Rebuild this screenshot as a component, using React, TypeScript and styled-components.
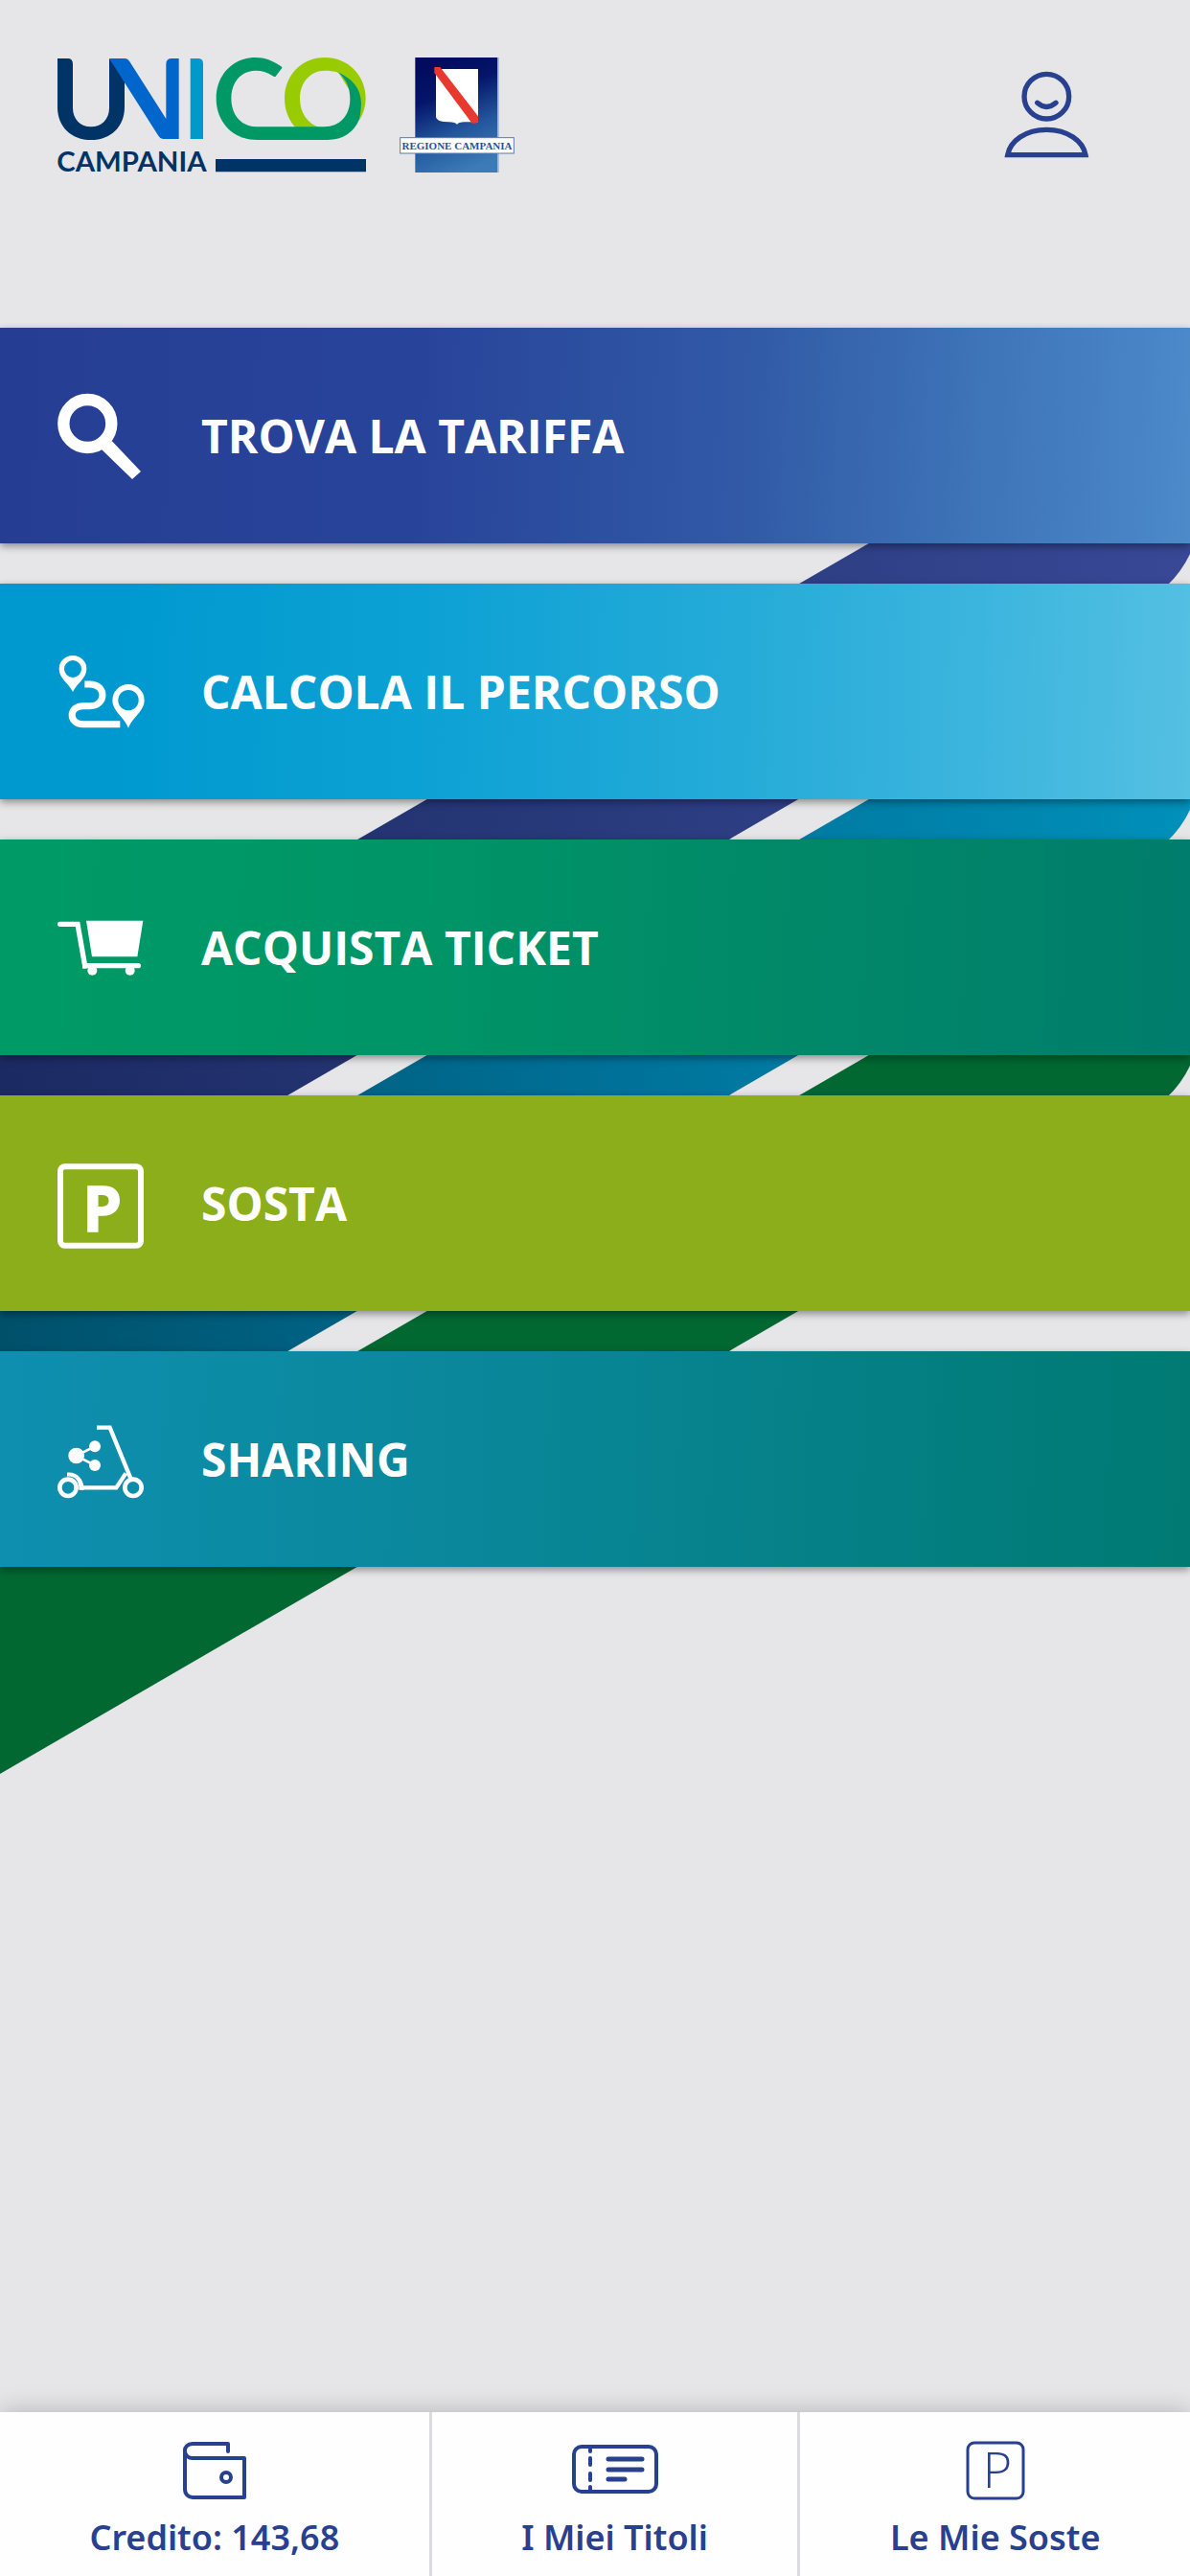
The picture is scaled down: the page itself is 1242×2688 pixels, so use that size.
import React from "react";
import styled, { createGlobalStyle } from "styled-components";

const BLUE = "#27408f";

const GlobalStyle = createGlobalStyle`
  *, *::before, *::after { box-sizing: border-box; }
  body {
    margin: 0;
    background: #e6e5e7;
    font-family: "Open Sans", "Noto Sans", sans-serif;
  }
`;

const Screen = styled.div`
  display: flex;
  flex-direction: column;
  min-height: 100vh;
`;

const Header = styled.header`
  display: flex;
  align-items: flex-start;
  justify-content: space-between;
  padding: 60px 105px 162px 60px;
`;

const Brands = styled.div`
  display: flex;
  gap: 35px;
`;

const Logo = styled.svg`
  overflow: visible;
`;

const ProfileButton = styled.button`
  display: flex;
  margin: 0;
  padding: 14px 0;
  border: 0;
  background: none;
  color: ${BLUE};
  cursor: pointer;
`;

const Menu = styled.nav`
  position: relative;
  z-index: 0;
  display: flex;
  flex-direction: column;
  gap: 42px;
`;

const Ribbons = styled.svg`
  position: absolute;
  top: 0;
  left: 0;
  z-index: -1;
  width: 100%;
  height: 1509px;
`;

const MenuItem = styled.a<{ $fill: string }>`
  display: flex;
  align-items: center;
  gap: 60px;
  height: 225px;
  padding: 0 60px;
  background: ${(p) => p.$fill};
  box-shadow: 0 3px 8px rgba(0, 0, 0, 0.4);
  color: #fff;
  font-size: 48px;
  line-height: 64px;
  font-weight: 700;
  text-decoration: none;
`;

const MenuIcon = styled.svg`
  flex: none;
  width: 90px;
  height: 90px;
  overflow: visible;
`;

const TabBar = styled.nav`
  display: flex;
  margin-top: auto;
  background: #fefefe;
  box-shadow: 0 -2px 24px rgba(0, 0, 0, 0.2);
`;

const Tab = styled.a`
  display: flex;
  flex: 1 1 auto;
  flex-direction: column;
  align-items: center;
  gap: 16px;
  padding: 31px 24px 16px;
  color: ${BLUE};
  font-family: "Noto Sans", "Open Sans", sans-serif;
  font-size: 36px;
  line-height: 48px;
  font-weight: 600;
  text-decoration: none;

  & + & {
    border-left: 3px solid #dbdade;
  }
`;

const TabIcon = styled.svg`
  width: 90px;
  height: 60px;
  overflow: visible;
  fill: none;
  stroke: currentColor;
  stroke-width: 4;
`;

const UnicoLogo = () => (
  <Logo width="322" height="120" viewBox="60 60 966 360" role="img" aria-label="Unico Campania">
    <path fill="#036" d="M60 63H92Q108 63 108 80V218C108 253 132 277 165 277S222 253 222 218V63L270 125V215C270 276 227 318 165 318S60 276 60 215Z" />
    <path fill="#06c" d="M222 63H272Q280 63 286 73L400 252V80Q400 63 418 63H440V315H390Q382 315 376 305Z" />
    <path fill="#09c" d="M476 63H500Q516 63 516 79V315H476Z" />
    <path fill="#9c0" d="M806 280C783 255 771 222 771 188C771 115 825 60 897 60S1025 115 1025 188C1025 212 1018 236 1004 258L985 180L940 107C925 102 910 101 897 101C850 101 819 140 819 188C819 232 842 268 884 280Z" />
    <path fill="#096" d="M763 93L743 119Q739 122 734 118C717 106 700 101 680 101C635 101 604 138 604 188S635 277 682 277H895C944 277 976 242 976 190C976 155 965 126 935 104C985 126 1011 158 1011 205C1010 223 1009 238 1004 256C988 294 955 318 905 318H685C610 318 557 262 557 188S610 60 680 60C708 60 735 70 759 87Q764 90 763 93Z" />
    <path fill="#036" d="M555 378H1026V418H555Z" />
    <text x="58" y="418" fill="#036" fontFamily="Lato, sans-serif" fontWeight="700" fontSize="88">CAMPANIA</text>
  </Logo>
);

const RegioneLogo = () => (
  <Logo width="120" height="120" viewBox="81 60 360 360" role="img" aria-label="Regione Campania">
    <defs>
      <linearGradient id="regione" x1="0.3" y1="0" x2="0.6" y2="1">
        <stop offset="0" stopColor="#020b5c" />
        <stop offset="0.3" stopColor="#04156a" />
        <stop offset="0.65" stopColor="#23569c" />
        <stop offset="1" stopColor="#3b7cb8" />
      </linearGradient>
    </defs>
    <path fill="url(#regione)" d="M130 60H388V420H130Z" />
    <path fill="#8fb0d8" d="M388 60H392V420H388Z" />
    <path fill="#fff" d="M195 96H327V262H285Q265 262 261 270Q256 262 235 262Q196 262 195 246Z" />
    <path fill="#e8392f" d="M190 90H208L327 244V259L320 266H308L190 108Z" />
    <rect x="83" y="311" width="356" height="49" fill="#fff" stroke="#5878b4" strokeWidth="3" />
    <text x="261" y="347" textAnchor="middle" fill="#27519f" fontFamily="'Liberation Serif', serif" fontWeight="700" fontSize="33">REGIONE CAMPANIA</text>
  </Logo>
);

const ProfileIcon = () => (
  <svg width="89" height="92" viewBox="83 73 267 276" fill="none" stroke="currentColor" strokeWidth="16" aria-hidden="true">
    <circle cx="216" cy="153" r="70" />
    <path strokeLinecap="round" d="M187 173Q216 198 245 173" />
    <path d="M94 336C102 292 150 257 216 257S330 292 338 336Z" />
  </svg>
);

const RibbonShape = "M0 750L1242 31V236Q1233 255 1218 269L0 975Z";

const RibbonArt = () => (
  <Ribbons viewBox="0 0 1242 1509" preserveAspectRatio="none" aria-hidden="true">
    <defs>
      <linearGradient id="ribbonBlue">
        <stop offset="0" stopColor="#1b2a62" />
        <stop offset="0.5" stopColor="#293a7c" />
        <stop offset="1" stopColor="#384896" />
      </linearGradient>
      <linearGradient id="ribbonTeal">
        <stop offset="0" stopColor="#00506a" />
        <stop offset="0.5" stopColor="#007097" />
        <stop offset="1" stopColor="#0090ba" />
      </linearGradient>
    </defs>
    <path fill="url(#ribbonBlue)" d={RibbonShape} />
    <path fill="url(#ribbonTeal)" transform="translate(0 267)" d={RibbonShape} />
    <path fill="#026831" transform="translate(0 534)" d={RibbonShape} />
  </Ribbons>
);

const SearchIcon = () => (
  <MenuIcon viewBox="60 58 270 270" aria-hidden="true">
    <circle cx="154" cy="154" r="75" fill="none" stroke="#fff" strokeWidth="37" />
    <path fill="#fff" d="M198 235L230 208L321 304L294 328Z" />
  </MenuIcon>
);

const RouteIcon = () => (
  <MenuIcon viewBox="60 50 270 270" aria-hidden="true">
    <path fill="#fff" fillRule="evenodd" d="M108 185C95 158 65 143 65 113A43 42 0 0 1 151 113C151 143 121 158 108 185ZM108 86A27 27 0 1 0 108 140A27 27 0 1 0 108 86Z" />
    <path fill="#fff" fillRule="evenodd" d="M282 298C268 262 232 245 232 211A50 50 0 0 1 332 211C332 245 296 262 282 298ZM282 179A32 32 0 1 0 282 243A32 32 0 1 0 282 179Z" />
    <path fill="none" stroke="#fff" strokeWidth="21" d="M145 161H162C214 161 214 229 162 229H140C94 229 94 286 140 286H256" />
  </MenuIcon>
);

const CartIcon = () => (
  <MenuIcon viewBox="60 40 270 270" aria-hidden="true">
    <path fill="#fff" d="M150 90H328L310 203H168Z" />
    <path fill="none" stroke="#fff" strokeWidth="16" strokeLinecap="round" d="M68 101H123L146 231H313" />
    <path fill="#fff" d="M138 226H152V240H138Z" />
    <circle cx="169" cy="246" r="15" fill="#fff" />
    <circle cx="287" cy="246" r="15" fill="#fff" />
  </MenuIcon>
);

const ParkingIcon = () => (
  <MenuIcon viewBox="60 61 270 270" aria-hidden="true">
    <rect x="69" y="80" width="252" height="247" rx="14" fill="none" stroke="#fff" strokeWidth="18" />
    <text x="200" y="282" textAnchor="middle" fill="#fff" stroke="#fff" strokeWidth="4" fontFamily="'Open Sans', sans-serif" fontWeight="700" fontSize="197">P</text>
  </MenuIcon>
);

const ScooterIcon = () => (
  <MenuIcon viewBox="60 52 270 270" fill="none" stroke="#fff" aria-hidden="true">
    <circle cx="93" cy="275" r="26" strokeWidth="14" />
    <circle cx="297" cy="275" r="26" strokeWidth="14" />
    <path strokeWidth="13" d="M183 87H224L290 248M130 275H244L274 230" />
    <path fill="#fff" stroke="none" d="M90 228C118 224 144 246 143 282H127C129 254 115 238 90 240Z" />
    <path strokeWidth="8" d="M177 146L118 175L177 205" />
    <circle cx="119" cy="175" r="25" fill="#fff" stroke="none" />
    <circle cx="177" cy="146" r="18" fill="#fff" stroke="none" />
    <circle cx="177" cy="205" r="18" fill="#fff" stroke="none" />
  </MenuIcon>
);

const WalletIcon = () => (
  <TabIcon viewBox="0 0 90 60" aria-hidden="true">
    <path strokeLinecap="round" strokeLinejoin="round" d="M59 10V2H22A8 7 0 0 0 14 10V50A8 8 0 0 0 22 58H76V17H22A8 7 0 0 1 14 10" />
    <circle cx="57" cy="37" r="5" />
  </TabIcon>
);

const TicketIcon = () => (
  <TabIcon viewBox="0 0 90 60" aria-hidden="true">
    <rect x="2" y="5" width="86" height="47" rx="8" />
    <path strokeLinecap="round" d="M19 8V10M19 17V24M19 33V40M19 47V50" />
    <path strokeWidth="5" strokeLinecap="round" d="M38 18H73M38 29H73M38 39H55" />
  </TabIcon>
);

const StopIcon = () => (
  <TabIcon viewBox="0 0 90 60" aria-hidden="true">
    <rect x="16" y="1" width="58" height="58" rx="7" strokeWidth="3" />
    <text x="47" y="48" textAnchor="middle" fill="currentColor" stroke="none" fontFamily="'Open Sans', sans-serif" fontWeight="300" fontSize="52">P</text>
  </TabIcon>
);

const menu = [
  { label: "TROVA LA TARIFFA", Icon: SearchIcon, fill: "linear-gradient(92deg, #253e93 0%, #28449a 35%, #3159a6 62%, #3e74b8 82%, #4c8aca 100%)" },
  { label: "CALCOLA IL PERCORSO", Icon: RouteIcon, fill: "linear-gradient(92deg, #0099cf 10%, #0ca1d4 35%, #25abd8 62%, #3cb5de 82%, #54c0e2 100%)" },
  { label: "ACQUISTA TICKET", Icon: CartIcon, fill: "linear-gradient(92deg, #009a66 5%, #009467 38%, #018a68 62%, #007d6c 100%)" },
  { label: "SOSTA", Icon: ParkingIcon, fill: "#8dae1b" },
  { label: "SHARING", Icon: ScooterIcon, fill: "linear-gradient(92deg, #0f8fb0 0%, #098697 45%, #047f83 75%, #007a72 100%)" },
];

const tabs = [
  { label: "Credito: 143,68", Icon: WalletIcon },
  { label: "I Miei Titoli", Icon: TicketIcon },
  { label: "Le Mie Soste", Icon: StopIcon },
];

export default function App() {
  return (
    <Screen>
      <GlobalStyle />
      <Header>
        <Brands>
          <UnicoLogo />
          <RegioneLogo />
        </Brands>
        <ProfileButton type="button" aria-label="Profilo">
          <ProfileIcon />
        </ProfileButton>
      </Header>
      <Menu aria-label="Servizi">
        <RibbonArt />
        {menu.map(({ label, Icon, fill }) => (
          <MenuItem key={label} href="#" $fill={fill}>
            <Icon />
            {label}
          </MenuItem>
        ))}
      </Menu>
      <TabBar aria-label="Area personale">
        {tabs.map(({ label, Icon }) => (
          <Tab key={label} href="#">
            <Icon />
            {label}
          </Tab>
        ))}
      </TabBar>
    </Screen>
  );
}
